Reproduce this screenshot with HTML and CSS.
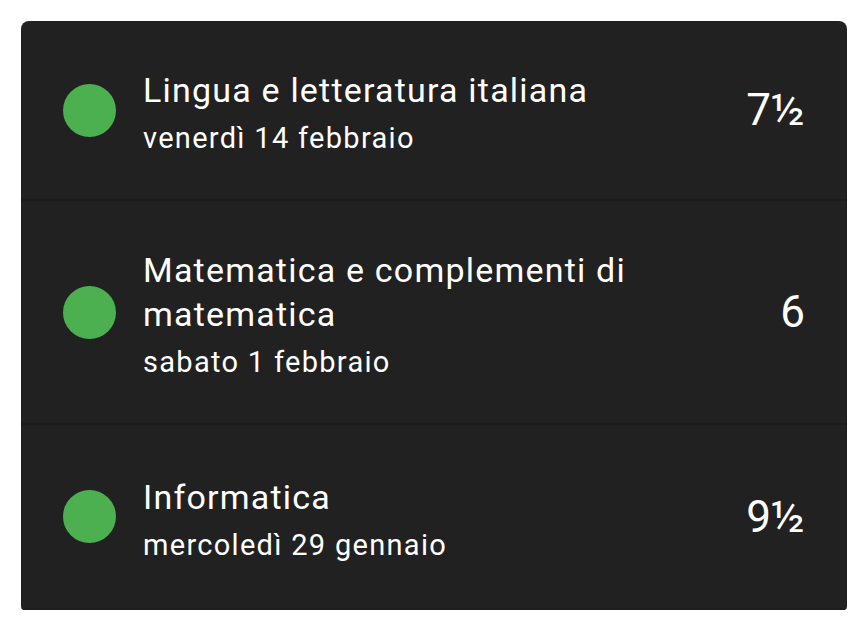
FILE: index.html
```html
<!DOCTYPE html>
<html lang="it">
<head>
<meta charset="utf-8">
<title>Voti</title>
<link rel="stylesheet" href="styles.css">
</head>
<body>
<div class="card">
  <div class="row row-1">
    <span class="dot"></span>
    <div class="info">
      <div class="subject">Lingua e letteratura italiana</div>
      <div class="date">venerdì 14 febbraio</div>
    </div>
    <div class="grade">7½</div>
  </div>
  <div class="row row-2">
    <span class="dot"></span>
    <div class="info">
      <div class="subject">Matematica e complementi di matematica</div>
      <div class="date">sabato 1 febbraio</div>
    </div>
    <div class="grade">6</div>
  </div>
  <div class="row row-3">
    <span class="dot"></span>
    <div class="info">
      <div class="subject">Informatica</div>
      <div class="date">mercoledì 29 gennaio</div>
    </div>
    <div class="grade">9½</div>
  </div>
</div>
</body>
</html>
```
FILE: styles.css
```css
html, body {
  margin: 0;
  background: #ffffff;
}
body {
  padding: 21px 21px 0 21px;
  font-family: Roboto, "Liberation Sans", sans-serif;
}
.card {
  width: 826px;
  background: #212121;
  border-radius: 8px 8px 4px 4px;
  overflow: hidden;
}
.row {
  display: flex;
  align-items: center;
  padding: 0 42px 0 42px;
  border-bottom: 2px solid #1c1c1c;
  box-sizing: content-box;
}
.row-1 { height: 178px; }
.row-2 { height: 222px; }
.row-3 { height: 183px; }
.dot {
  flex: 0 0 auto;
  width: 53px;
  height: 53px;
  border-radius: 50%;
  background: #4caf50;
  margin-right: 27px;
}
.info {
  flex: 1 1 auto;
  min-width: 0;
  padding-top: 4px;
  padding-right: 90px;
}
.subject {
  color: #ffffff;
  font-size: 34px;
  line-height: 44px;
  letter-spacing: 1.2px;
}
.date {
  color: #ffffff;
  font-size: 29px;
  line-height: 36px;
  letter-spacing: 1.3px;
  margin-top: 8px;
}
.grade {
  flex: 0 0 auto;
  color: #ffffff;
  font-size: 44px;
  line-height: 52px;
}
```
